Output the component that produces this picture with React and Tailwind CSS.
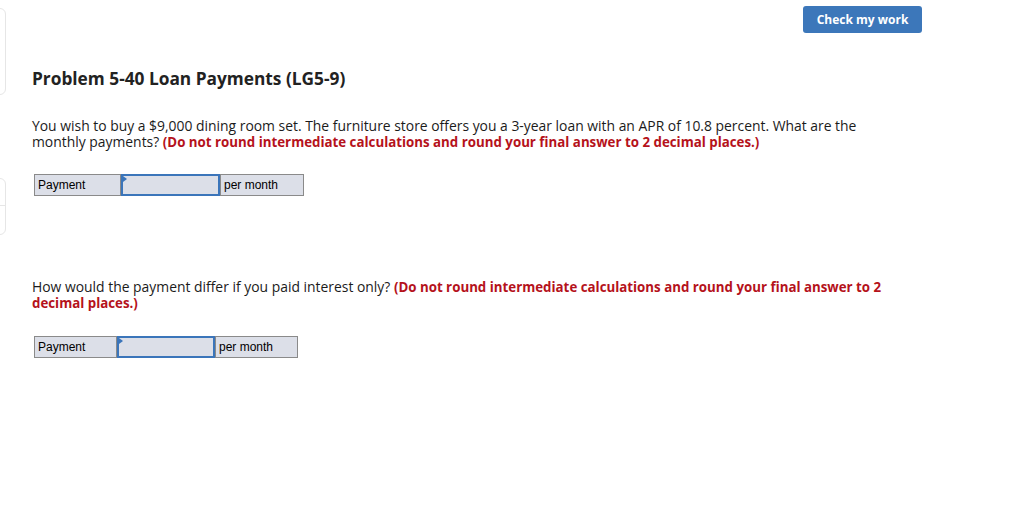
import React from 'react';

const AnswerRow = ({ w1, w2, w3 }) => {
    return (
        <div className="flex h-[22px] font-['Liberation_Sans',Arial,sans-serif] text-[12px] text-black">
            <div className={`${w1} border border-[#8a8a8a] bg-[#dcdfe8] pl-[3px] leading-[20px]`}>Payment</div>
            <div className={`${w2} relative border-2 border-[#3b75ba] bg-[#dcdfe8]`}>
                {/* little blue marker in the corner */}
                <span className="absolute left-0 top-0 h-0 w-0 border-y-[3px] border-l-[4px] border-y-transparent border-l-[#3b75ba]"></span>
            </div>
            <div className={`${w3} border border-[#8a8a8a] bg-[#dcdfe8] pl-[3px] leading-[20px]`}>per month</div>
        </div>
    );
};

const App = () => {
    return (
        <div className="relative h-[505px] w-[1024px] overflow-hidden bg-white font-['Open_Sans','Lato',sans-serif] text-[#1b1b1b]">
            {/* side tabs peeking in from the left */}
            <div className="absolute -left-[10px] top-[8px] h-[87px] w-[16px] rounded-r-[6px] border border-[#e6e6e6]"></div>
            <div className="absolute -left-[10px] top-[178px] flex h-[57px] w-[16px] flex-col rounded-r-[6px] border border-[#e6e6e6]">
                <div className="h-[27px] border-b border-[#e6e6e6]"></div>
            </div>

            <div className="flex justify-end pr-[102px] pt-[6px]">
                <button className="h-[27px] w-[119px] rounded-[3px] bg-[#3c77ba] text-[12px] font-bold text-white">Check my work</button>
            </div>

            <div className="pl-[32px]">
                <h2 className="mt-[36px] text-[17.3px] font-bold leading-[20px] text-[#222]">Problem 5-40 Loan Payments (LG5-9)</h2>

                <p className="mt-[29px] w-[870px] text-[13.9px] leading-[16px]">
                    You wish to buy a $9,000 dining room set. The furniture store offers you a 3-year loan with an APR of 10.8 percent. What are the monthly payments?{' '}
                    <span className="text-[13.3px] font-bold leading-[16px] text-[#b5121b]">(Do not round intermediate calculations and round your final answer to 2 decimal places.)</span>
                </p>

                <div className="ml-[2px] mt-[24px]">
                    <AnswerRow w1="w-[87px]" w2="w-[99px]" w3="w-[84px]" />
                </div>

                <p className="mt-[83px] w-[870px] text-[13.9px] leading-[16px]">
                    How would the payment differ if you paid interest only?{' '}
                    <span className="text-[13.3px] font-bold leading-[16px] text-[#b5121b]">(Do not round intermediate calculations and round your final answer to 2 decimal places.)</span>
                </p>

                <div className="ml-[2px] mt-[25px]">
                    <AnswerRow w1="w-[83px]" w2="w-[98px]" w3="w-[83px]" />
                </div>
            </div>
        </div>
    );
};

export default App;
